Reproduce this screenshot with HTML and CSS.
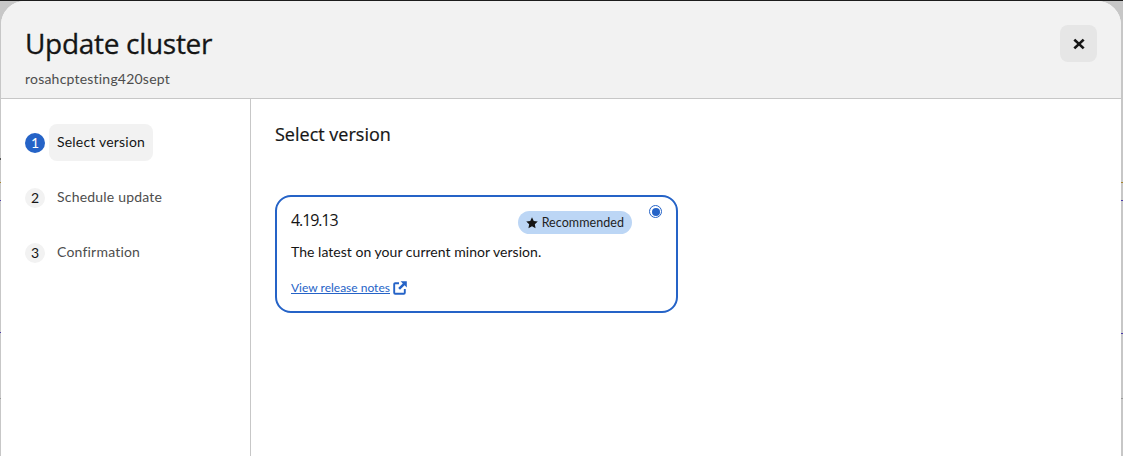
FILE: index.html
```html
<!DOCTYPE html>
<html lang="en">
<head>
<meta charset="utf-8">
<title>Update cluster</title>
<link rel="stylesheet" href="styles.css">
</head>
<body>
<div class="backdrop">
  <span class="mark mark-notch"></span>
  <span class="mark mark-l1"></span>
  <span class="mark mark-l2"></span>
  <span class="mark mark-l3"></span>
  <span class="mark mark-l4"></span>
  <span class="mark mark-l5"></span>
  <span class="mark mark-r1"></span>
  <span class="mark mark-r2"></span>
  <span class="mark mark-r3"></span>
  <span class="mark mark-r4"></span>
  <section class="modal">
    <header class="modal-header">
      <div class="titles">
        <h1 class="title">Update cluster</h1>
        <p class="subtitle">rosahcptesting420sept</p>
      </div>
      <button class="close" type="button" aria-label="Close">
        <svg viewBox="0 0 12 12" width="14" height="14" aria-hidden="true"><path d="M2.800 1.500 6 4.500 9.200 1.500 10.800 3 7.600 6 10.800 9 9.200 10.500 6 7.500 2.800 10.500 1.200 9 4.400 6 1.200 3Z" fill="#151515"/></svg>
      </button>
    </header>
    <div class="modal-body">
      <nav class="steps">
        <div class="step current"><span class="num">1</span><span class="label">Select version</span></div>
        <div class="step"><span class="num">2</span><span class="label">Schedule update</span></div>
        <div class="step"><span class="num">3</span><span class="label">Confirmation</span></div>
      </nav>
      <main class="content">
        <h2 class="heading">Select version</h2>
        <article class="card">
          <div class="card-top">
            <span class="version">4.19.13</span>
            <span class="badge">
              <svg viewBox="0 0 24 24" width="12" height="12" aria-hidden="true"><path d="M12 .5l3.500 7.300 8 1.100-5.800 5.600 1.400 8L12 18.700l-7.100 3.800 1.400-8L.5 8.900l8-1.100z" fill="#151515"/></svg>
              Recommended
            </span>
          </div>
          <p class="desc">The latest on your current minor version.</p>
          <a class="link" href="#"><span class="link-text">View release notes</span>
            <svg viewBox="0 0 14 14" width="14" height="14" aria-hidden="true"><path d="M6 2.200H2.200a1 1 0 0 0-1 1v8.600a1 1 0 0 0 1 1h8.600a1 1 0 0 0 1-1V8" fill="none" stroke="#2563c7" stroke-width="1.900"/><path d="M7.600.2h6.200v6.200L11.600 4.200 7 8.800 5.200 7 9.800 2.400Z" fill="#2563c7"/></svg>
          </a>
          <span class="radio"><span class="radio-dot"></span></span>
        </article>
      </main>
    </div>
  </section>
</div>
</body>
</html>
```
FILE: styles.css
```css
* { box-sizing: border-box; }
html, body { margin: 0; height: 100%; }
body { font-family: Lato, "Noto Sans", sans-serif; color: #151515; overflow: hidden; }
.backdrop { position: relative; width: 1123px; height: 456px; background: #c7c7c7; border-top: 1px solid #1d1d1d; padding-left: 1px; padding-right: 2px; overflow: hidden; }
.mark { position: absolute; height: 1px; width: 2px; }
.mark-notch { left: 823px; top: -1px; width: 27px; background: #c4c4c4; }
.mark-l1 { left: 0; top: 157px; height: 2px; width: 1px; background: #555; }
.mark-l2 { left: 0; top: 181px; background: #a8852c; width: 1px; }
.mark-l3 { left: 0; top: 199px; background: #4a3aa8; width: 1px; }
.mark-l4 { left: 0; top: 331px; background: #4a3aa8; width: 1px; }
.mark-l5 { left: 0; top: 397px; background: #999; width: 1px; }
.mark-r1 { right: 0; top: 181px; background: #a8852c; }
.mark-r2 { right: 0; top: 199px; background: #4a3aa8; }
.mark-r3 { right: 0; top: 332px; background: #4a3aa8; }
.mark-r4 { right: 0; top: 397px; background: #999; }
.modal { position: relative; display: flex; flex-direction: column; width: 1120px; height: 470px; background: #fff; border-radius: 24px 24px 0 0; overflow: hidden; }
.modal-header { display: flex; justify-content: space-between; align-items: flex-start; height: 98px; padding: 24px 24px 0; background: #f2f2f2; border-bottom: 1px solid #c7c7c7; }
.title { margin: 0; font-family: "Open Sans", "Noto Sans", sans-serif; font-weight: 500; font-size: 28px; line-height: 36px; letter-spacing: -.3px; -webkit-text-stroke: .3px #151515; }
.subtitle { margin: 8px 0 0; font-size: 14px; line-height: 20px; color: #4d4d4d; letter-spacing: .21px; }
.close { display: flex; align-items: center; justify-content: center; width: 37px; height: 37px; padding: 0; border: 0; border-radius: 8px; background: #e6e6e6; }
.modal-body { display: flex; flex: 1; }
.steps { display: flex; flex-direction: column; gap: 18px; flex: none; width: 201px; padding: 25px 24px 0; border-right: 1px solid #c7c7c7; box-sizing: content-box; }
.step { display: flex; align-items: center; gap: 4px; height: 37px; }
.num { display: flex; align-items: center; justify-content: center; width: 20px; height: 20px; padding-bottom: 1px; border-radius: 50%; background: #f2f2f2; font-size: 14px; color: #151515; }
.label { display: flex; align-items: center; height: 37px; padding: 0 8px 2px; border-radius: 8px; font-size: 14px; color: #4d4d4d; letter-spacing: .2px; }
.current .num { background: #2563c7; color: #fff; }
.current .label { background: #f2f2f2; color: #151515; }
.content { flex: 1; padding: 23px 24px 0; }
.heading { margin: 0 0 49px; font-family: "Open Sans", "Noto Sans", sans-serif; font-size: 18px; line-height: 24px; font-weight: 500; -webkit-text-stroke: .2px #151515; }
.card { position: relative; width: 403px; height: 118px; padding: 11px 14px 0; border: 2px solid #2563c7; border-radius: 16px; }
.card-top { display: flex; justify-content: space-between; align-items: flex-start; width: 341px; height: 24px; }
.version { font-family: "Open Sans", "Noto Sans", sans-serif; font-size: 16px; line-height: 24px; font-weight: 500; letter-spacing: -1.100px; }
.badge { display: inline-flex; align-items: center; gap: 4px; height: 23px; margin-top: 3px; padding: 0 8px; border-radius: 12px; background: #bcd6f5; font-size: 12.500px; color: #1f1f1f; letter-spacing: .06px; }
.desc { margin: 10px 0 0; font-size: 14px; line-height: 20px; letter-spacing: .03px; }
.link { display: inline-flex; align-items: center; gap: 3px; margin-top: 18px; font-size: 12px; color: #2563c7; }
.link-text { text-decoration: underline; }
.radio { position: absolute; top: 8px; right: 14px; display: flex; align-items: center; justify-content: center; width: 13px; height: 13px; border: 1px solid #2563c7; border-radius: 50%; background: #fff; }
.radio-dot { width: 8px; height: 8px; border-radius: 50%; background: #2563c7; }
```
